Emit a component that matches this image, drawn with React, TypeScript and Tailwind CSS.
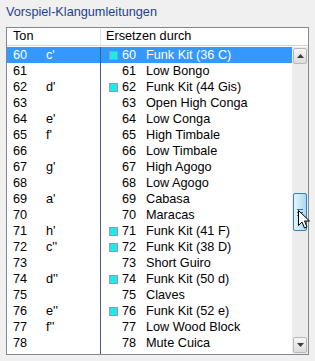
const rows = [
  { ton: '60', note: "c'", nr: '60', name: 'Funk Kit (36 C)', kit: true },
  { ton: '61', note: '', nr: '61', name: 'Low Bongo', kit: false },
  { ton: '62', note: "d'", nr: '62', name: 'Funk Kit (44 Gis)', kit: true },
  { ton: '63', note: '', nr: '63', name: 'Open High Conga', kit: false },
  { ton: '64', note: "e'", nr: '64', name: 'Low Conga', kit: false },
  { ton: '65', note: "f'", nr: '65', name: 'High Timbale', kit: false },
  { ton: '66', note: '', nr: '66', name: 'Low Timbale', kit: false },
  { ton: '67', note: "g'", nr: '67', name: 'High Agogo', kit: false },
  { ton: '68', note: '', nr: '68', name: 'Low Agogo', kit: false },
  { ton: '69', note: "a'", nr: '69', name: 'Cabasa', kit: false },
  { ton: '70', note: '', nr: '70', name: 'Maracas', kit: false },
  { ton: '71', note: "h'", nr: '71', name: 'Funk Kit (41 F)', kit: true },
  { ton: '72', note: "c''", nr: '72', name: 'Funk Kit (38 D)', kit: true },
  { ton: '73', note: '', nr: '73', name: 'Short Guiro', kit: false },
  { ton: '74', note: "d''", nr: '74', name: 'Funk Kit (50 d)', kit: true },
  { ton: '75', note: '', nr: '75', name: 'Claves', kit: false },
  { ton: '76', note: "e''", nr: '76', name: 'Funk Kit (52 e)', kit: true },
  { ton: '77', note: "f''", nr: '77', name: 'Low Wood Block', kit: false },
  { ton: '78', note: '', nr: '78', name: 'Mute Cuica', kit: false },
];

function ArrowButton({ down }: { down?: boolean }) {
  return (
    <div className="h-[16px] mx-[1px] flex items-center justify-center border border-[#b8b8b8] rounded-[2px] bg-gradient-to-b from-[#f7f7f7] to-[#dcdcdc]">
      <svg width="7" height="4" viewBox="0 0 7 4">
        {down ? <path d="M0 0h7L3.5 4z" fill="#3c3c3c" /> : <path d="M0 4h7L3.5 0z" fill="#3c3c3c" />}
      </svg>
    </div>
  );
}

export default function App() {
  return (
    <div className="w-[315px] h-[361px] bg-[#f0f0f0] relative text-[12.7px] font-['Liberation_Sans',Arial,sans-serif]">
      <div className="pl-[6px] pt-[5px] h-[27px] text-[#1c3f94] leading-[15px]">Vorspiel-Klangumleitungen</div>
      <div className="mx-[6px] h-[328px] border border-[#828790] bg-white flex flex-col">
        <div className="h-[18px] flex border-b border-[#d5d5d5] text-black leading-[17px]">
          <div className="w-[94px] pl-[6px] border-r border-[#e3e3e3]">Ton</div>
          <div className="flex-1 pl-[5px]">Ersetzen durch</div>
        </div>
        <div className="flex flex-1 pt-[1px]">
          <div className="flex-1 flex flex-col relative">
            {rows.map((r, i) => {
              const sel = i === 0;
              return (
                <div key={r.ton} className={`h-[16px] flex leading-[16px] ${sel ? 'bg-[#3399ff] text-white' : 'text-black'}`}>
                  <div className="w-[94px] flex border-r border-[#4a5a78]">
                    <span className="w-[39px] pl-[6px]">{r.ton}</span>
                    <span>{r.note}</span>
                  </div>
                  <div className="flex items-center">
                    <span className="w-[17px] flex justify-end">
                      {r.kit && <span className="w-[9px] h-[9px] bg-[#1ee8f0] border border-[#8fa0a8]" />}
                    </span>
                    <span className="w-[18px] text-right">{r.nr}</span>
                    <span className="pl-[10px]">{r.name}</span>
                  </div>
                </div>
              );
            })}
            <div className="flex-1 flex">
              <div className="w-[94px] border-r border-[#4a5a78]" />
            </div>
          </div>
          <div className="w-[16px] bg-[#ececec] flex flex-col py-[1px]">
            <ArrowButton />
            <div className="flex-1 flex flex-col pt-[129px]">
              <div className="h-[38px] mx-[1px] rounded-[2px] border border-[#3c7fb1] bg-gradient-to-r from-[#e3f4fc] to-[#a9d9f3] flex flex-col items-center justify-center gap-[2px]">
                <span className="w-[6px] h-[1px] bg-[#3b6f98]" />
                <span className="w-[6px] h-[1px] bg-[#3b6f98]" />
                <span className="w-[6px] h-[1px] bg-[#3b6f98]" />
              </div>
            </div>
            <ArrowButton down />
          </div>
        </div>
      </div>
      <svg className="absolute left-[298px] top-[210px]" width="13" height="20" viewBox="0 0 13 20">
        <path d="M0.5 0.5v15l3.5-3.5 2.5 6 2.5-1-2.5-6h5z" fill="white" stroke="black" strokeWidth="1" />
      </svg>
    </div>
  );
}
